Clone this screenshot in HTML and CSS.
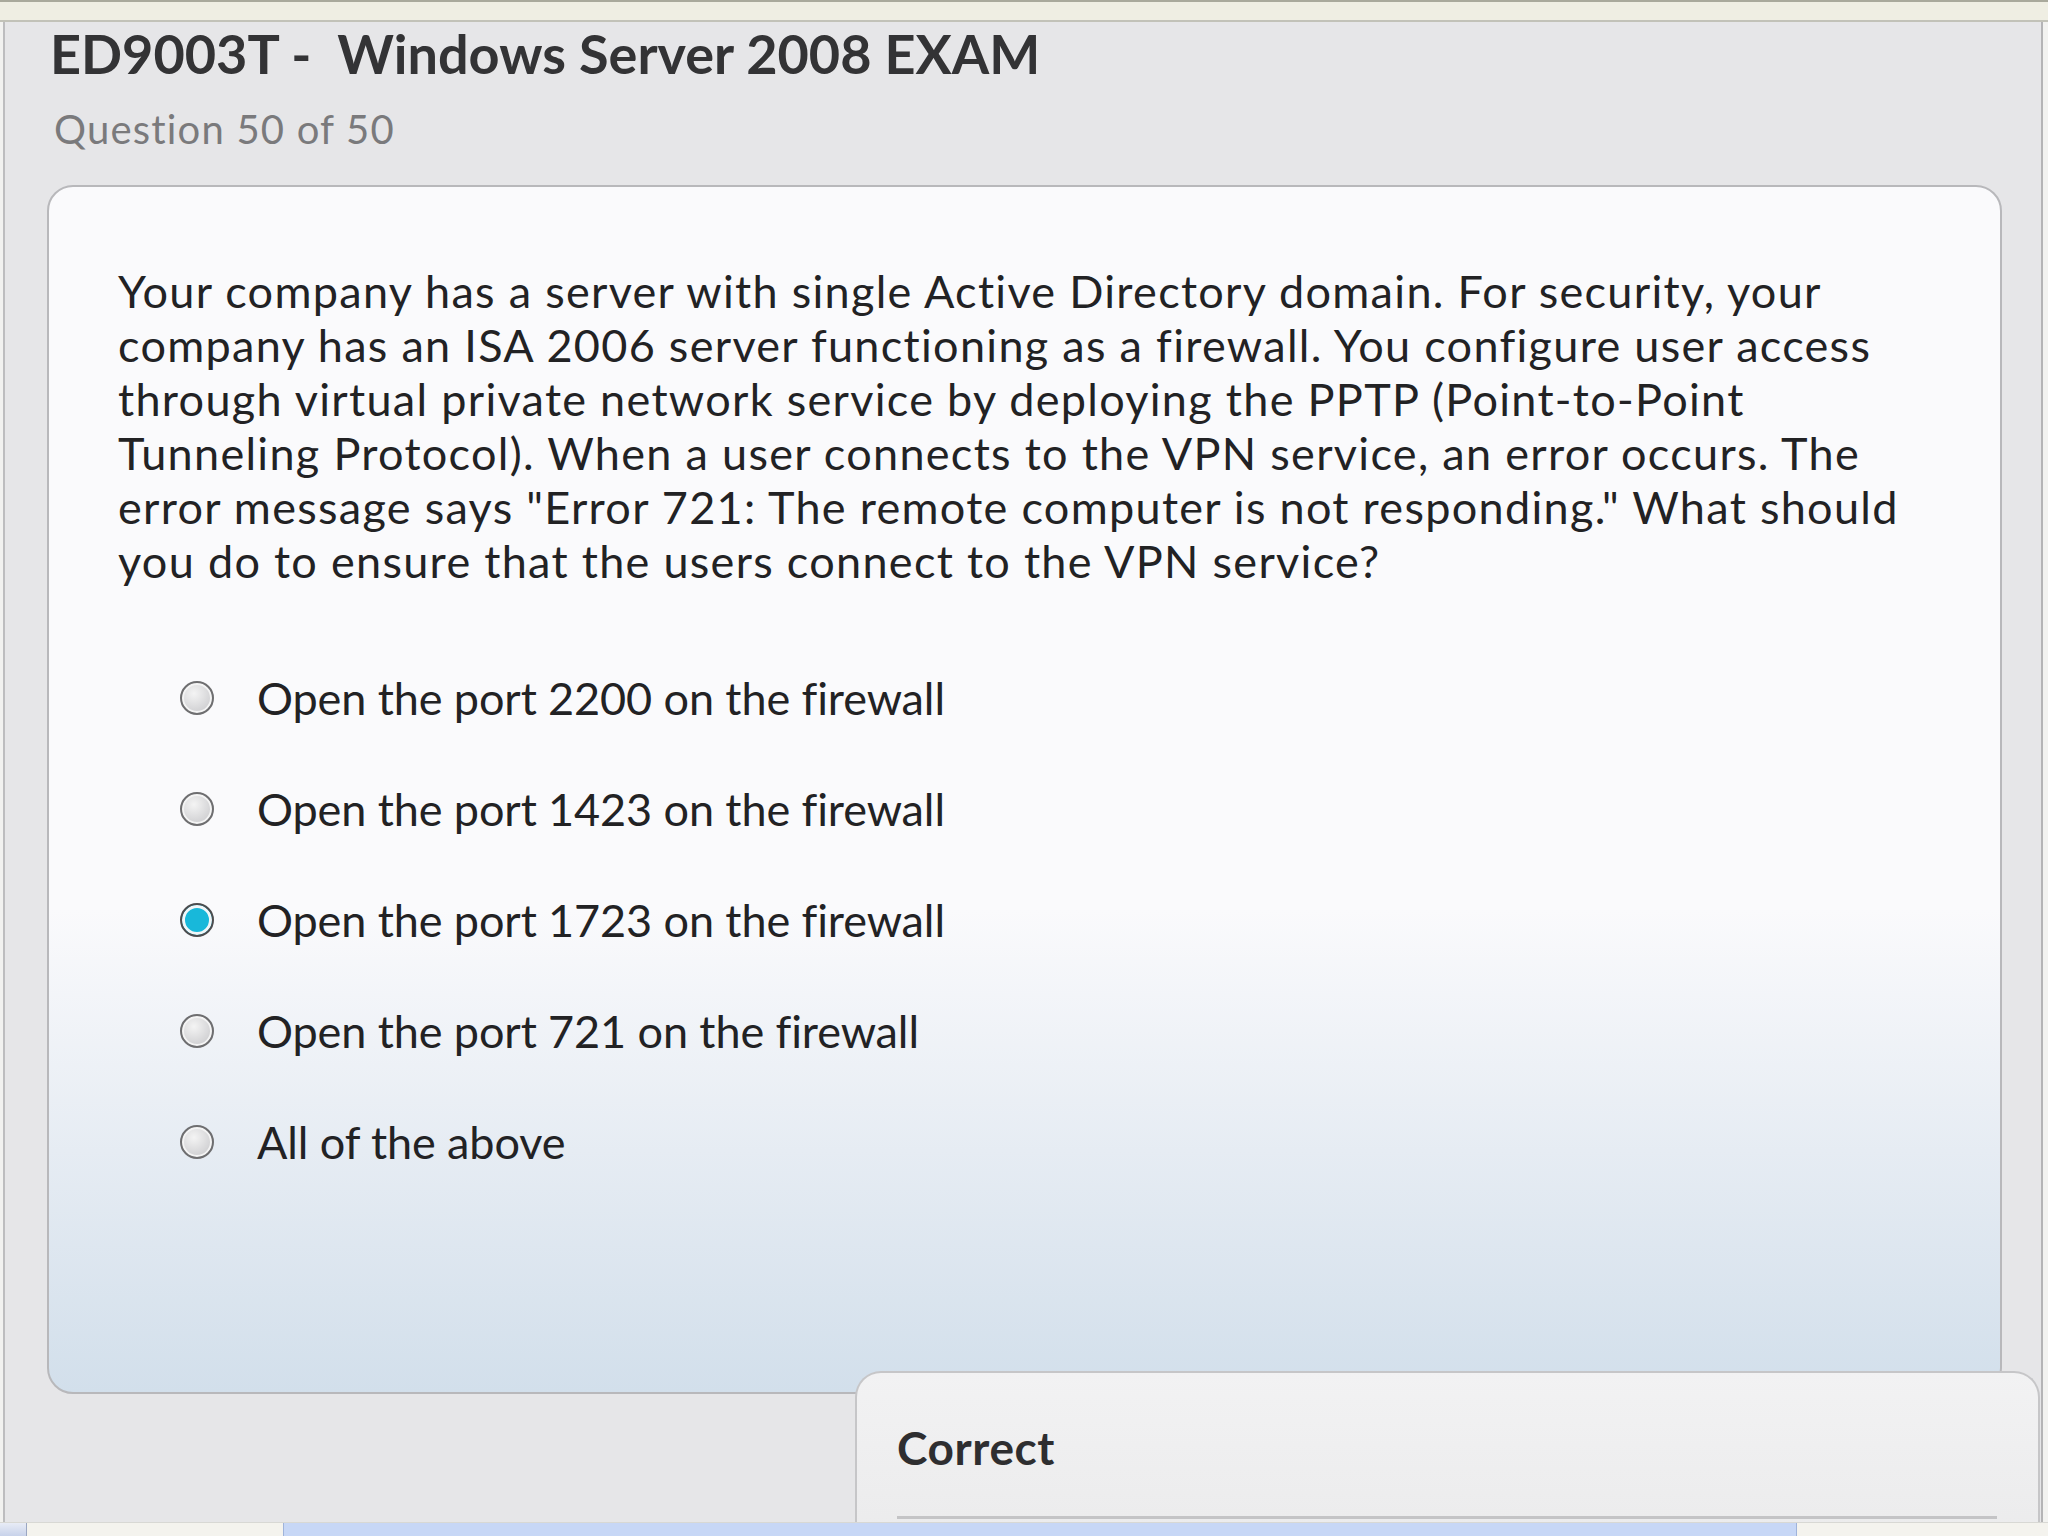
FILE: index.html
```html
<!DOCTYPE html>
<html lang="en">
<head>
<meta charset="utf-8">
<title>ED9003T - Windows Server 2008 EXAM</title>
<link rel="stylesheet" href="styles.css">
</head>
<body>
<div class="screen">
  <div class="topbar"></div>
  <div class="window">
    <div class="main">
      <h1 class="title">ED9003T -&nbsp; Windows Server 2008 EXAM</h1>
      <div class="subtitle">Question 50 of 50</div>
      <div class="card">
        <p class="question">Your company has a server with single Active Directory domain. For security, your<br>company has an ISA 2006 server functioning as a firewall. You configure user access<br>through virtual private network service by deploying the PPTP (Point-to-Point<br>Tunneling Protocol). When a user connects to the VPN service, an error occurs. The<br>error message says "Error 721: The remote computer is not responding." What should<br>you do to ensure that the users connect to the VPN service?</p>
        <ul class="options">
          <li class="option"><span class="radio"></span><span class="label">Open the port 2200 on the firewall</span></li>
          <li class="option"><span class="radio"></span><span class="label">Open the port 1423 on the firewall</span></li>
          <li class="option"><span class="radio checked"></span><span class="label">Open the port 1723 on the firewall</span></li>
          <li class="option"><span class="radio"></span><span class="label">Open the port 721 on the firewall</span></li>
          <li class="option"><span class="radio"></span><span class="label">All of the above</span></li>
        </ul>
      </div>
    </div>
    <div class="feedback">
      <div class="feedback-title">Correct</div>
      <div class="feedback-rule"></div>
    </div>
  </div>
  <div class="taskbar">
    <span class="tb-icon"></span>
    <span class="tb-task"></span>
  </div>
</div>
</body>
</html>
```

FILE: styles.css
```css
html, body {
  margin: 0;
  padding: 0;
}
body {
  width: 2048px;
  height: 1536px;
  overflow: hidden;
  background: #f2f2f0;
  font-family: Lato, "Open Sans", "Liberation Sans", sans-serif;
}
.screen {
  display: flex;
  flex-direction: column;
  width: 2048px;
  height: 1536px;
}
.topbar {
  height: 18px;
  flex: none;
  background: #efeee3;
  border-top: 2px solid #a9a99c;
  border-bottom: 2px solid #c2c2b8;
}
.window {
  position: relative;
  flex: 1;
  margin-left: 3px;
  width: 2036px;
  background: #e6e6e8;
  border-left: 2px solid #bdbdbf;
  border-right: 2px solid #b4b4b6;
  overflow: hidden;
}
.main {
  display: flex;
  flex-direction: column;
  align-items: flex-start;
}
.title {
  margin: 0;
  padding-left: 45px;
  font-size: 54px;
  line-height: 1.2;
  font-weight: 700;
  color: #333335;
  letter-spacing: 0;
}
.subtitle {
  margin-top: 18px;
  padding-left: 49px;
  font-size: 40px;
  line-height: 1.2;
  color: #7a7a7c;
  letter-spacing: 1.2px;
}
.card {
  margin-top: 32px;
  margin-left: 42px;
  width: 1955px;
  height: 1209px;
  border: 2px solid #b8b8bb;
  border-radius: 26px;
  background: linear-gradient(to bottom, #fafafc 0%, #fafafc 60%, #e6ecf3 80%, #d2dfeb 100%);
  padding: 77px 0 0 69px;
  box-sizing: border-box;
}
.question {
  margin: 0;
  font-size: 45px;
  line-height: 54px;
  color: #222224;
  white-space: nowrap;
  letter-spacing: 1.3px;
}
.options {
  list-style: none;
  margin: 55px 0 0 0;
  padding: 0 0 0 62px;
}
.option {
  display: flex;
  align-items: center;
  height: 111px;
}
.radio {
  flex: none;
  width: 30px;
  height: 30px;
  border: 2px solid #6e6e70;
  border-radius: 50%;
  background: radial-gradient(circle at 40% 35%, #f4f4f4 0%, #d6d6d8 60%, #c4c4c6 100%);
  box-shadow: inset 0 0 0 2px #f4f4f4;
}
.radio.checked {
  border-color: #4c4c4e;
  background: #18b8da;
  box-shadow: inset 0 0 0 3px #f2f6f8;
}
.label {
  margin-left: 43px;
  font-size: 45px;
  line-height: 54px;
  color: #222224;
  white-space: nowrap;
  letter-spacing: -0.1px;
}
.feedback {
  position: absolute;
  left: 850px;
  top: 1349px;
  width: 1185px;
  height: 170px;
  box-sizing: border-box;
  border: 2px solid #c6c6c8;
  border-bottom: none;
  border-radius: 26px 26px 0 0;
  background: linear-gradient(to bottom, #f2f2f3, #ebebec);
  padding: 47px 0 0 40px;
  display: flex;
  flex-direction: column;
}
.feedback-title {
  font-size: 46px;
  line-height: 1.2;
  font-weight: 700;
  color: #2e2e30;
  letter-spacing: 0.6px;
}
.feedback-rule {
  margin-top: 41px;
  width: 1100px;
  height: 3px;
  background: #c4c4c6;
}
.taskbar {
  flex: none;
  height: 13px;
  position: relative;
  z-index: 2;
  display: flex;
  align-items: stretch;
  background: #f4f3ee;
  border-top: 1px solid #d8d8d4;
}
.tb-icon {
  width: 26px;
  background: linear-gradient(to bottom, #e8ecf6, #c8d2ea);
  border-right: 1px solid #9aa6c2;
}
.tb-task {
  margin-left: 256px;
  width: 1512px;
  background: #c7d7f6;
  border-left: 1px solid #9fb3da;
  border-right: 1px solid #9fb3da;
}
```
